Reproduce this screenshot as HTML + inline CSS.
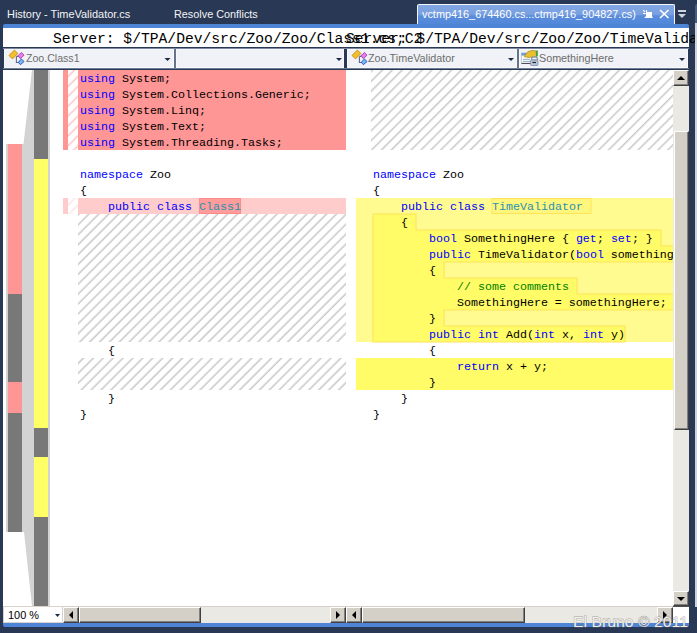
<!DOCTYPE html>
<html><head><meta charset="utf-8">
<style>
*{margin:0;padding:0;box-sizing:border-box}
html,body{width:697px;height:633px;overflow:hidden;background:#293955;position:relative}
.a{position:absolute}
.ui{font-family:"Liberation Sans",sans-serif;font-size:11.5px;white-space:pre;transform-origin:0 0;line-height:14px}
.mono{font-family:"Liberation Mono",monospace;white-space:pre}
.code{font-family:"Liberation Mono",monospace;font-size:11.667px;line-height:16px;margin-top:1px;white-space:pre;color:#000}
.kw{color:#0000ff}
.ty{color:#2b91af}
.cm{color:#008000}
.btn{background:#d4d0c8;border-top:1px solid #fff;border-left:1px solid #fff;border-right:1px solid #404040;border-bottom:1px solid #404040;box-shadow:inset -1px -1px 0 #808080}
</style></head>
<body>
<div class="a ui" style="left:7px;top:7px;color:#f4f4f4;transform:scaleX(0.952);font-size:11.5px;">History - TimeValidator.cs</div>
<div class="a ui" style="left:174px;top:7px;color:#f4f4f4;transform:scaleX(0.943);font-size:11.5px;">Resolve Conflicts</div>
<div class="a" style="left:417px;top:4px;width:258px;height:22px;border:1px solid #f4f6fb;border-bottom:none;border-radius:2px 2px 0 0;background:linear-gradient(#83a8e3 0,#789fe0 45%,#5a8cdb 52%,#5087d8 100%)"></div>
<div class="a ui" style="left:421.5px;top:7px;color:#ffffff;transform:scaleX(0.945);font-size:11.5px;">vctmp416_674460.cs...ctmp416_904827.cs)</div>
<div class="a" style="left:3px;top:24px;width:686px;height:4px;background:#4d84d6;border-radius:2px 2px 0 0"></div>
<div class="a" style="left:417px;top:24px;width:258px;height:4px;background:#4f85d7"></div>
<div class="a" style="left:3px;top:28px;width:686px;height:19px;background:#fff"></div>
<div class="a mono" style="left:53px;top:30px;font-size:14.66px;line-height:18px;color:#000">Server: $/TPA/Dev/src/Zoo/Zoo/Class1.cs;C2</div>
<div class="a mono" style="left:346px;top:30px;font-size:14.66px;line-height:18px;color:#000">Server: $/TPA/Dev/src/Zoo/Zoo/TimeValida</div>
<div class="a" style="left:4px;top:49px;width:170px;height:19px;background:#f0f2f7;border:1px solid #f8f9fc"></div>
<div class="a" style="left:176px;top:49px;width:168px;height:19px;background:#f0f2f7;border:1px solid #f8f9fc"></div>
<div class="a" style="left:347px;top:49px;width:170px;height:19px;background:#f0f2f7;border:1px solid #f8f9fc"></div>
<div class="a" style="left:519px;top:49px;width:169px;height:19px;background:#f0f2f7;border:1px solid #f8f9fc"></div>
<div class="a" style="left:174px;top:48px;width:2px;height:20px;background:#66738a"></div>
<div class="a" style="left:517px;top:48px;width:2px;height:20px;background:#66738a"></div>
<div class="a ui" style="left:26px;top:51px;color:#6d6d6d;transform:scaleX(0.92);font-size:11.5px;">Zoo.Class1</div>
<div class="a ui" style="left:368px;top:51px;color:#6d6d6d;transform:scaleX(0.938);font-size:11.5px;">Zoo.TimeValidator</div>
<div class="a ui" style="left:539px;top:51px;color:#6d6d6d;transform:scaleX(0.935);font-size:11.5px;">SomethingHere</div>
<div class="a" style="left:3px;top:68px;width:686px;height:1px;background:#6d7b93"></div>
<div class="a" style="left:3px;top:48px;width:686px;height:1px;background:#7c89a0"></div>
<div class="a" style="left:3px;top:70px;width:670px;height:536px;background:#fff"></div>
<svg class="a" style="left:0;top:0" width="673" height="633">
<rect x="356" y="198" width="317" height="144" fill="#fffb90"/>
<rect x="356" y="358" width="317" height="32" fill="#fffc68"/>
<rect x="492" y="198.5" width="99" height="15" fill="#fff67e" stroke="#ffe45a" stroke-width="1"/>
<path d="M373,214 L416,214 L416,230 L661,230 L661,246 L680,246 L680,262 L444,262 L444,278 L577,278 L577,294 L680,294 L680,310 L444,310 L444,326 L625,326 L625,342 L373,342 Z" fill="#fffc68" stroke="#ffe45a" stroke-width="1.2"/>
</svg>
<svg class="a" style="left:0;top:0" width="60" height="633">
<polygon points="32,70 34,70 34,606 32,606 24,532 22,532 22,144 23.5,144" fill="#d3d3d3"/>
<rect x="6" y="144" width="2" height="388" fill="#d3d3d3"/>
<rect x="48" y="70" width="2" height="536" fill="#d3d3d3"/>
<rect x="8" y="144" width="14" height="150" fill="#ff9696"/>
<rect x="8" y="294" width="14" height="88" fill="#787878"/>
<rect x="8" y="382" width="14" height="31" fill="#ff9696"/>
<rect x="8" y="413" width="14" height="119" fill="#787878"/>
<rect x="34" y="70" width="14" height="89" fill="#787878"/>
<rect x="34" y="159" width="14" height="269" fill="#ffff66"/>
<rect x="34" y="428" width="14" height="29" fill="#787878"/>
<rect x="34" y="457" width="14" height="60" fill="#ffff66"/>
<rect x="34" y="517" width="14" height="89" fill="#787878"/>
</svg>
<div class="a" style="left:78px;top:70px;width:268px;height:80px;background:#ff9696"></div>
<div class="a" style="left:63px;top:70px;width:5px;height:80px;background:#ff9696"></div>
<div class="a" style="left:78px;top:198px;width:268px;height:16px;background:#ffcccc"></div>
<div class="a" style="left:63px;top:198px;width:5px;height:16px;background:#ffcccc"></div>
<div class="a" style="left:199px;top:198px;width:42px;height:16px;background:#ff9c9c;border:1px solid #ff8a8a"></div>
<svg class="a" style="left:0;top:0" width="697" height="633">
<defs>
<pattern id="hg" patternUnits="userSpaceOnUse" width="7" height="7" patternTransform="rotate(45)">
<rect x="3.493" y="-1" width="1.5" height="9" fill="#c8c8c8"/>
</pattern>
<pattern id="hgr" patternUnits="userSpaceOnUse" width="6.982" height="7" patternTransform="rotate(45)">
<rect x="4.963" y="-1" width="1.5" height="9" fill="#c8c8c8"/>
</pattern>
<pattern id="hp" patternUnits="userSpaceOnUse" width="7" height="7" patternTransform="rotate(45)">
<rect x="3.493" y="-1" width="1.5" height="9" fill="#ffc6c6"/>
</pattern>
<pattern id="hp2" patternUnits="userSpaceOnUse" width="7" height="7" patternTransform="rotate(45)">
<rect x="3.593" y="-1" width="1.3" height="9" fill="#ffdede"/>
</pattern>
</defs>
<rect x="68" y="70" width="10" height="80" fill="#fff"/>
<rect x="68" y="70" width="10" height="80" fill="url(#hp)"/>
<rect x="68" y="198" width="10" height="16" fill="#fff"/>
<rect x="68" y="198" width="10" height="16" fill="url(#hp2)"/>
<rect x="78" y="214" width="268" height="128" fill="url(#hg)"/>
<rect x="78" y="358" width="268" height="32" fill="url(#hg)"/>
<rect x="371" y="70" width="302" height="80" fill="url(#hgr)"/>
</svg>
<div class="a code" style="left:80px;top:70px"><span class="kw">using</span> System;</div>
<div class="a code" style="left:80px;top:86px"><span class="kw">using</span> System.Collections.Generic;</div>
<div class="a code" style="left:80px;top:102px"><span class="kw">using</span> System.Linq;</div>
<div class="a code" style="left:80px;top:118px"><span class="kw">using</span> System.Text;</div>
<div class="a code" style="left:80px;top:134px"><span class="kw">using</span> System.Threading.Tasks;</div>
<div class="a code" style="left:80px;top:166px"><span class="kw">namespace</span> Zoo</div>
<div class="a code" style="left:80px;top:182px">{</div>
<div class="a code" style="left:80px;top:198px">    <span class="kw">public</span> <span class="kw">class</span> <span class="ty">Class1</span></div>
<div class="a code" style="left:80px;top:342px">    {</div>
<div class="a code" style="left:80px;top:390px">    }</div>
<div class="a code" style="left:80px;top:406px">}</div>
<div class="a" style="left:347px;top:70px;width:326px;height:536px;overflow:hidden">
<div class="a code" style="left:26px;top:96px"><span class="kw">namespace</span> Zoo</div>
<div class="a code" style="left:26px;top:112px">{</div>
<div class="a code" style="left:26px;top:128px">    <span class="kw">public</span> <span class="kw">class</span> <span class="ty">TimeValidator</span></div>
<div class="a code" style="left:26px;top:144px">    {</div>
<div class="a code" style="left:26px;top:160px">        <span class="kw">bool</span> SomethingHere { <span class="kw">get</span>; <span class="kw">set</span>; }</div>
<div class="a code" style="left:26px;top:176px">        <span class="kw">public</span> TimeValidator(<span class="kw">bool</span> somethingHere)</div>
<div class="a code" style="left:26px;top:192px">        {</div>
<div class="a code" style="left:26px;top:208px">            <span class="cm">// some comments</span></div>
<div class="a code" style="left:26px;top:224px">            SomethingHere = somethingHere;</div>
<div class="a code" style="left:26px;top:240px">        }</div>
<div class="a code" style="left:26px;top:256px">        <span class="kw">public</span> <span class="kw">int</span> Add(<span class="kw">int</span> x, <span class="kw">int</span> y)</div>
<div class="a code" style="left:26px;top:272px">        {</div>
<div class="a code" style="left:26px;top:288px">            <span class="kw">return</span> x + y;</div>
<div class="a code" style="left:26px;top:304px">        }</div>
<div class="a code" style="left:26px;top:320px">    }</div>
<div class="a code" style="left:26px;top:336px">}</div>
</div>
<div class="a" style="left:673px;top:70px;width:16px;height:536px;background:#ebe9e4"></div>
<div class="a btn" style="left:673px;top:70px;width:16px;height:16px"></div>
<div class="a btn" style="left:674px;top:131px;width:15px;height:299px"></div>
<div class="a btn" style="left:673px;top:591px;width:16px;height:15px"></div>
<div class="a" style="left:672px;top:606px;width:17px;height:17px;background:#fff;border-left:1px solid #404040;border-top:1px solid #505050"></div>
<div class="a" style="left:63px;top:606px;width:610px;height:17px;background:#ebe9e4;border-top:1px solid #d4d0c8"></div>
<div class="a" style="left:3px;top:606px;width:60px;height:17px;background:#fff;border:1px solid #d8d4cc"></div>
<div class="a ui" style="left:8px;top:608px;color:#000;transform:scaleX(0.95);font-size:11.5px;">100 %</div>
<div class="a btn" style="left:63px;top:607px;width:16px;height:16px"></div>
<div class="a btn" style="left:79px;top:607px;width:122px;height:16px"></div>
<div class="a btn" style="left:330px;top:607px;width:16px;height:16px"></div>
<div class="a btn" style="left:346px;top:607px;width:16px;height:16px"></div>
<div class="a btn" style="left:362px;top:607px;width:163px;height:16px"></div>
<div class="a btn" style="left:657px;top:607px;width:16px;height:16px"></div>
<div class="a" style="left:3px;top:623px;width:686px;height:4px;background:#4d84d6;border-radius:0 0 2px 2px"></div>
<svg class="a" style="left:0;top:0" width="697" height="633">
<!-- combo arrows -->
<path d="M164.5,58 h6 l-3,3 z" fill="#1b2a45"/>
<path d="M336,58 h6 l-3,3 z" fill="#1b2a45"/>
<path d="M508,58 h6 l-3,3 z" fill="#1b2a45"/>
<path d="M679,58 h6 l-3,3 z" fill="#1b2a45"/>
<!-- zoom arrow -->
<path d="M55,614 h5 l-2.5,3 z" fill="#1b2a45"/>
<!-- scroll arrows -->
<path d="M73,611 v8 l-4,-4 z" fill="#000"/>
<path d="M336,611 v8 l4,-4 z" fill="#000"/>
<path d="M356,611 v8 l-4,-4 z" fill="#000"/>
<path d="M663,611 v8 l4,-4 z" fill="#000"/>
<path d="M677,80 h8 l-4,-4 z" fill="#000"/>
<path d="M677,597 h8 l-4,4 z" fill="#000"/>
</svg>
<svg class="a" style="left:0;top:0" width="697" height="633">
<g transform="translate(0,0)">
<path d="M16.4,56.4 h2 M16.4,56.4 V62.5 h2.5" stroke="#5a6a88" stroke-width="1.1" fill="none"/>
<polygon points="9,55.4 14.4,50.1 17.8,53.4 12.5,58.9" fill="#f2c02c" stroke="#c88a10" stroke-width="0.9"/>
<polygon points="18,55.7 21.5,52.5 24,55.2 20.4,58.7" fill="#e880ea" stroke="#a838b0" stroke-width="0.9"/>
<polygon points="18.2,62.2 21.5,59 24,61.6 20.4,64.7" fill="#7cb4f4" stroke="#1e50c0" stroke-width="0.9"/>
</g>
<g transform="translate(343,0)">
<path d="M16.4,56.4 h2 M16.4,56.4 V62.5 h2.5" stroke="#5a6a88" stroke-width="1.1" fill="none"/>
<polygon points="9,55.4 14.4,50.1 17.8,53.4 12.5,58.9" fill="#f2c02c" stroke="#c88a10" stroke-width="0.9"/>
<polygon points="18,55.7 21.5,52.5 24,55.2 20.4,58.7" fill="#e880ea" stroke="#a838b0" stroke-width="0.9"/>
<polygon points="18.2,62.2 21.5,59 24,61.6 20.4,64.7" fill="#7cb4f4" stroke="#1e50c0" stroke-width="0.9"/>
</g>
<g transform="translate(519,48)">
<rect x="2.5" y="5" width="10" height="10.5" fill="#fbfcfe" stroke="#b8c4d4" stroke-width="0.8"/>
<rect x="2.5" y="5" width="10" height="2.6" fill="#6a9ce0"/>
<path d="M4,11.3 h7 M4,13.4 h7" stroke="#8aa0c0" stroke-width="0.9"/>
<path d="M2.5,15.4 h10" stroke="#303030" stroke-width="0.9"/>
<path d="M5,8.5 L9,3.5 L14,2.3 L17,3 L17.5,8.5 L13,9 L10,9.5 L7,9 Z" fill="#e8c030" stroke="#a88a20" stroke-width="0.7"/>
<rect x="17" y="2.5" width="1.8" height="6" fill="#40a040"/>
<path d="M12.5,11 a3,2.2 0 0 1 6,0 v1 h-6 Z" fill="none" stroke="#8a9ab4" stroke-width="1.2"/>
<rect x="11.5" y="12" width="7.5" height="5.5" rx="1" fill="#b8c4d4" stroke="#7c8ca8" stroke-width="0.8"/>
<path d="M13.5,14.5 h3.5" stroke="#202838" stroke-width="1.2"/>
</g>
<path d="M643.2,10.2 L645,12" stroke="#fff" stroke-width="1.2"/>
<rect x="646" y="10" width="1.1" height="2.5" fill="#fff"/>
<rect x="643" y="13" width="2.8" height="1" fill="#fff"/>
<polygon points="646,12 652,12 652,16 653,17.9 644.2,17.9 646,16" fill="#fff"/>
<path d="M660,10 L668.5,18 M668.5,10 L660,18" stroke="#fff" stroke-width="1.6"/>
<rect x="678" y="10" width="8" height="2" fill="#ced3dc"/>
<polygon points="678,14 686,14 682,18" fill="#ced3dc"/>
</svg>
<div class="a" style="left:695px;top:4px;width:2px;height:19px;background:#4a5a78;border-radius:2px 0 0 0"></div>
<div class="a" style="left:695px;top:23px;width:2px;height:584px;background:#cdd1d9"></div>
<svg class="a" style="left:0;top:0" width="697" height="633">
<text x="573" y="626.5" font-family="Liberation Sans" font-size="15.3" fill="none" stroke="#6a6a6a" stroke-opacity="0.6" stroke-width="0.8" textLength="115" lengthAdjust="spacingAndGlyphs">El Bruno © 2011</text>
<text x="573" y="626.5" font-family="Liberation Sans" font-size="15.3" fill="#f2eee8" textLength="115" lengthAdjust="spacingAndGlyphs">El Bruno © 2011</text>
</svg>
</body></html>
